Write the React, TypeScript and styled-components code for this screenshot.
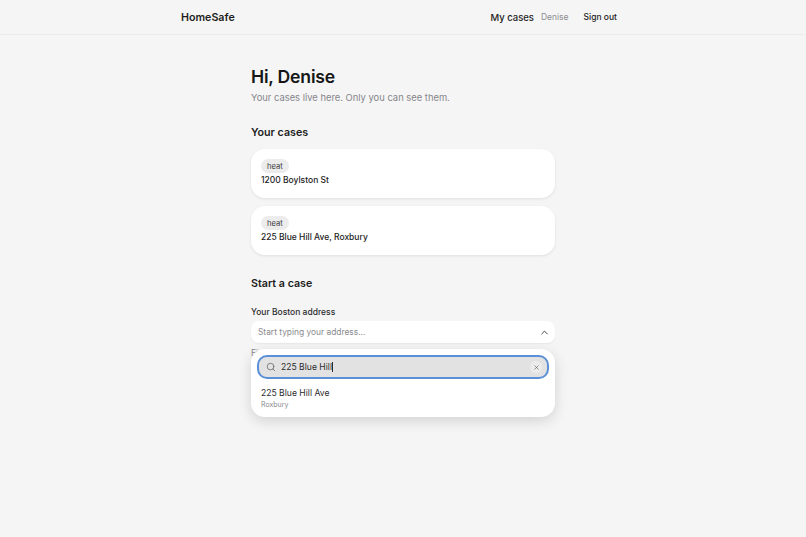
import styled, { createGlobalStyle } from 'styled-components'
import { ChevronUp, Search, X } from 'lucide-react'

const GlobalStyle = createGlobalStyle`
  html, body {
    margin: 0;
    background: #f5f5f5;
    color: #1a1a1a;
    font-family: Inter, "Liberation Sans", sans-serif;
  }
  #root {
    min-height: 100vh;
  }
`;

const Header = styled.header`
  height: 34px;
  padding: 0 189px 0 181px;
  border-bottom: 1px solid #ececec;
  display: flex;
  align-items: center;
  justify-content: space-between;
`;

const Brand = styled.div`
  font-size: 10.7px;
  font-weight: 600;
  color: #1d1d1d;
`;

const Nav = styled.nav`
  display: flex;
  align-items: center;
`;

const NavLink = styled.a`
  font-size: 9.5px;
  font-weight: 500;
  color: #1d1d1d;
`;

const NavUser = styled.span`
  margin: 0 15px 0 7px;
  font-size: 8.5px;
  color: #8e8e93;
`;

const SignOut = styled.a`
  font-size: 8.5px;
  font-weight: 500;
  color: #1d1d1d;
`;

const Main = styled.main`
  width: 304px;
  margin: 0 auto;
  padding-top: 30px;
`;

const Title = styled.h1`
  margin: 0;
  font-size: 17.6px;
  line-height: 24px;
  font-weight: 600;
  letter-spacing: -0.2px;
  color: #161616;
`;

const Subtitle = styled.p`
  margin: 1px 0 0;
  font-size: 9.4px;
  line-height: 16px;
  color: #86868b;
`;

const SectionTitle = styled.h2<{ $top: number }>`
  margin: ${(p) => p.$top}px 0 0;
  font-size: 10.7px;
  line-height: 16px;
  font-weight: 600;
  color: #1d1d1d;
`;

const CaseList = styled.div`
  margin-top: 8px;
  display: flex;
  flex-direction: column;
  gap: 8px;
`;

const CaseCard = styled.div`
  height: 49px;
  box-sizing: border-box;
  padding: 10px 10px 0;
  display: flex;
  flex-direction: column;
  align-items: flex-start;
  background: #fff;
  border-radius: 14px;
  box-shadow: 0 1px 3px rgba(0, 0, 0, 0.09);
`;

const Tag = styled.span`
  height: 14px;
  padding: 0 6px;
  border-radius: 7px;
  background: #ececec;
  font-size: 7.6px;
  line-height: 15px;
  color: #3a3a3c;
`;

const CaseAddress = styled.div`
  font-size: 8.5px;
  line-height: 15px;
  font-weight: 500;
  color: #1d1d1d;
`;

const Field = styled.div`
  position: relative;
  margin-top: 13px;
`;

const Label = styled.label`
  display: block;
  font-size: 8.5px;
  line-height: 14px;
  font-weight: 500;
  color: #2c2c2e;
`;

const Select = styled.div`
  margin-top: 2px;
  height: 22px;
  box-sizing: border-box;
  padding: 0 5px 0 7px;
  display: flex;
  align-items: center;
  justify-content: space-between;
  background: #fff;
  border-radius: 8px;
  box-shadow: 0 1px 2px rgba(0, 0, 0, 0.06);
  font-size: 8.4px;
  color: #8a8a8e;
`;

const Hint = styled.p`
  margin: 4px 0 0;
  font-size: 8.5px;
  line-height: 12px;
  color: #8a8a8e;
  white-space: nowrap;
`;

const Popover = styled.div`
  position: absolute;
  top: 44px;
  left: 0;
  right: 0;
  height: 68px;
  box-sizing: border-box;
  padding: 6px;
  background: #fff;
  border-radius: 14px;
  box-shadow: 0 4px 14px rgba(0, 0, 0, 0.14);
`;

const SearchBox = styled.div`
  height: 24px;
  box-sizing: border-box;
  padding: 0 5px 0 7px;
  display: flex;
  align-items: center;
  gap: 5px;
  background: #e2e2e2;
  border: 2px solid #5a90d8;
  border-radius: 10px;
  font-size: 8.6px;
  color: #2c2c2e;
`;

const Caret = styled.span`
  width: 1px;
  height: 10px;
  margin-left: -5px;
  background: #2c2c2e;
`;

const ClearButton = styled.span`
  width: 12px;
  height: 12px;
  margin-left: auto;
  display: flex;
  align-items: center;
  justify-content: center;
  border-radius: 50%;
  background: #ececec;
  color: #555;
`;

const Option = styled.div`
  padding: 8px 4px 0;
`;

const OptionName = styled.div`
  font-size: 8.6px;
  line-height: 12px;
  color: #2c2c2e;
`;

const OptionSub = styled.div`
  font-size: 7px;
  line-height: 11px;
  color: #8a8a8e;
`;

const App = () => (
  <>
    <GlobalStyle />
    <Header>
      <Brand>HomeSafe</Brand>
      <Nav>
        <NavLink>My cases</NavLink>
        <NavUser>Denise</NavUser>
        <SignOut>Sign out</SignOut>
      </Nav>
    </Header>
    <Main>
      <Title>Hi, Denise</Title>
      <Subtitle>Your cases live here. Only you can see them.</Subtitle>
      <SectionTitle $top={19}>Your cases</SectionTitle>
      <CaseList>
        <CaseCard>
          <Tag>heat</Tag>
          <CaseAddress>1200 Boylston St</CaseAddress>
        </CaseCard>
        <CaseCard>
          <Tag>heat</Tag>
          <CaseAddress>225 Blue Hill Ave, Roxbury</CaseAddress>
        </CaseCard>
      </CaseList>
      <SectionTitle $top={21}>Start a case</SectionTitle>
      <Field>
        <Label>Your Boston address</Label>
        <Select>
          Start typing your address...
          <ChevronUp size={11} color="#3a3a3c" />
        </Select>
        <Hint>Find your address to start a case about your home or building in Boston.</Hint>
        <Popover>
          <SearchBox>
            <Search size={10} color="#6e6e73" />
            225 Blue Hill
            <Caret />
            <ClearButton>
              <X size={7} />
            </ClearButton>
          </SearchBox>
          <Option>
            <OptionName>225 Blue Hill Ave</OptionName>
            <OptionSub>Roxbury</OptionSub>
          </Option>
        </Popover>
      </Field>
    </Main>
  </>
)

export default App
